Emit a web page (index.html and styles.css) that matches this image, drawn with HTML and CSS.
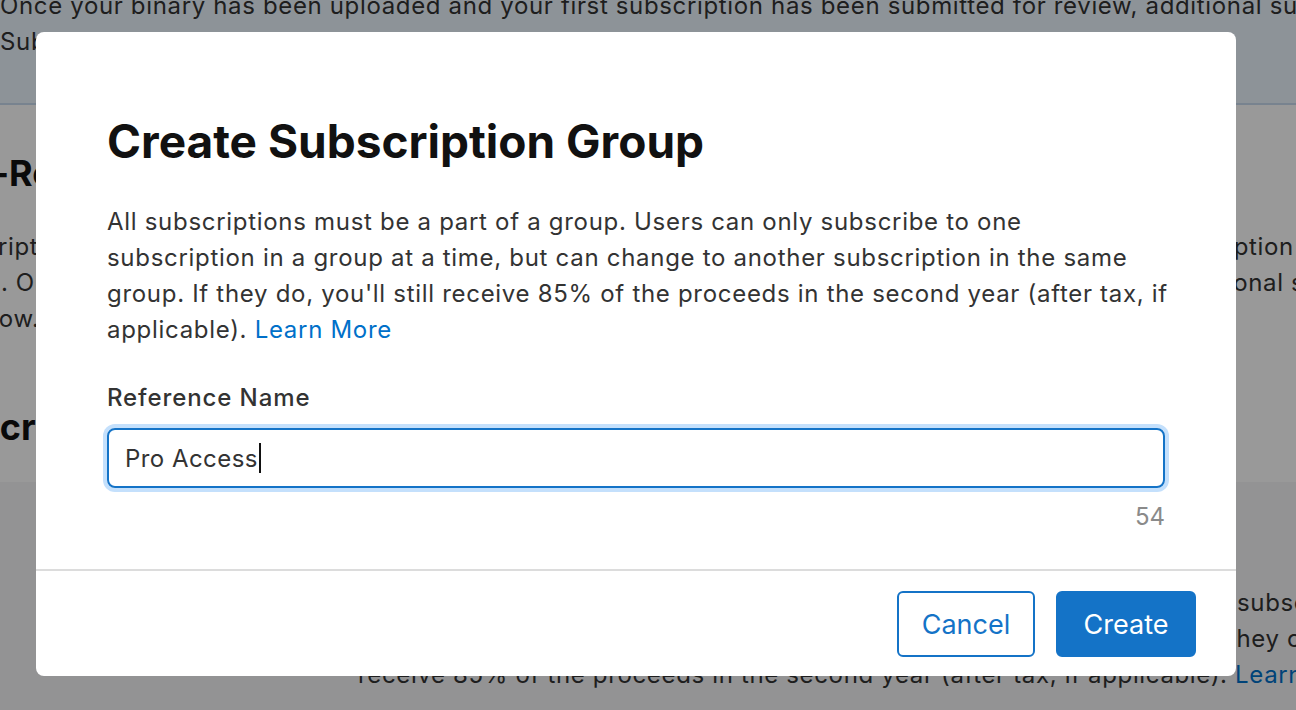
FILE: index.html
```html
<!DOCTYPE html>
<html lang="en">
<head>
<meta charset="utf-8">
<title>Create Subscription Group</title>
<link rel="stylesheet" href="styles.css">
</head>
<body>
<div class="page">
  <div class="banner">
    <p>Once your binary has been uploaded and your first subscription has been submitted for review, additional subscriptions can be submitted from the</p>
    <p>Subscriptions section of your app. <a class="link">Learn More</a></p>
  </div>
  <div class="main">
    <h2 class="bg-heading bg-heading-1">Auto-Renewable Subscriptions</h2>
    <div class="desc">
      <div class="bl bl1"><span class="bl-left">Subscriptions provide access to content, services, or premium features in your app on an ongoing basis.</span><span>subscription</span></div>
      <div class="bl bl2"><span class="bl-left">period. Only one subscription in a group can be active at a time, and users can move between them.</span><span>additional subscriptions</span></div>
      <div class="bl"><span class="bl-left">workflow.</span></div>
    </div>
    <h2 class="bg-heading bg-heading-2">Subscription Groups</h2>
  </div>
  <div class="card">
    <div class="bl bl3"><span class="bl-left">Users can only subscribe to one subscription in a group at a time. If they change</span><span>subscriptions</span></div>
    <div class="bl bl4"><span class="bl-left">within the same group, they keep their subscription days. If they do, you'll still</span><span>they can</span></div>
    <div class="bl"><span>receive 85% of the proceeds in the second year (after tax, if applicable). <a class="link">Learn More</a></span></div>
  </div>
</div>

<div class="overlay">
  <div class="modal" role="dialog" aria-labelledby="dlg-title">
    <div class="modal-body">
      <h1 id="dlg-title" class="modal-title">Create Subscription Group</h1>
      <p class="intro">All subscriptions must be a part of a group. Users can only subscribe to one<br>subscription in a group at a time, but can change to another subscription in the same<br>group. If they do, you'll still receive 85% of the proceeds in the second year (after tax, if<br>applicable). <a class="link">Learn More</a></p>
      <div class="field-label">Reference Name</div>
      <div class="field"><span class="field-text">Pro Access</span><span class="caret"></span></div>
      <div class="counter">54</div>
    </div>
    <div class="modal-footer">
      <button class="btn btn-secondary">Cancel</button>
      <button class="btn btn-primary">Create</button>
    </div>
  </div>
</div>
</body>
</html>
```

FILE: styles.css
```css
html, body {
  margin: 0;
  padding: 0;
  width: 1296px;
  height: 710px;
  overflow: hidden;
  background: #ffffff;
  font-family: Inter, "Noto Sans", "Liberation Sans", sans-serif;
  color: #333333;
}

p { margin: 0; }

.link { color: #0070c9; cursor: pointer; }

/* ---------- background page ---------- */
.page {
  margin-left: -76px;
  margin-top: -12px;
  width: 1500px;
  font-size: 24px;
  line-height: 36px;
  letter-spacing: 0.65px;
  color: #333333;
}

.banner {
  background: #ecf5fe;
  border-bottom: 2px solid #c8dbee;
  padding: 0 0 43px 76px;
  white-space: nowrap;
}

.bg-heading {
  margin: 0;
  font-size: 36px;
  line-height: 44px;
  font-weight: 700;
  letter-spacing: 0;
  color: #111111;
  white-space: nowrap;
}

.bg-heading-1 { margin: 46px 0 0 -16px; }
.bg-heading-2 { margin-left: -13px; }

.desc { margin-top: 34px; margin-bottom: 68px; }

.bl {
  display: grid;
  grid-template-columns: auto;
  white-space: nowrap;
}
.bl-left { overflow: hidden; margin-right: 12px; }
.bl1 { grid-template-columns: 1222px auto; }
.bl2 { grid-template-columns: 1243px auto; }
.bl3 { grid-template-columns: 879px auto; }
.bl4 { grid-template-columns: 870px auto; }

.card {
  margin-top: 33px;
  background: #f5f5f7;
  padding: 103px 0 60px 434px;
}

/* ---------- modal ---------- */
.overlay {
  position: fixed;
  inset: 0;
  background: rgba(0, 0, 0, 0.4);
  display: flex;
  align-items: flex-start;
  padding: 32px 60px 0 36px;
}

.modal {
  width: 1200px;
  background: #ffffff;
  border-radius: 8px;
  display: flex;
  flex-direction: column;
}

.modal-body {
  padding: 81px 71px 34px 71px;
  display: flex;
  flex-direction: column;
}

.modal-title {
  margin: 0 0 35px 0;
  font-size: 46px;
  line-height: 56px;
  font-weight: 700;
  color: #111111;
}

.intro {
  font-size: 24px;
  line-height: 36px;
  letter-spacing: 0.7px;
  white-space: nowrap;
  color: #333333;
}

.field-label {
  margin-top: 32px;
  font-size: 24px;
  line-height: 36px;
  font-weight: 500;
  letter-spacing: 0.9px;
  color: #333333;
}

.field {
  margin-top: 12px;
  height: 60px;
  box-sizing: border-box;
  border: 2px solid #1473c7;
  border-radius: 8px;
  box-shadow: 0 0 0 4px #c4e0fc;
  padding: 0 16px;
  display: flex;
  align-items: center;
  font-size: 24px;
  letter-spacing: 0.45px;
  color: #333333;
}

.caret {
  display: inline-block;
  width: 2px;
  height: 30px;
  background: #111111;
  margin-left: 1px;
}

.counter {
  margin-top: 11px;
  text-align: right;
  font-size: 24px;
  line-height: 36px;
  color: #8a8a8a;
}

.modal-footer {
  border-top: 2px solid #dcdcdc;
  padding: 20px 40px 19px 40px;
  display: flex;
  justify-content: flex-end;
  gap: 21px;
}

.btn {
  height: 66px;
  box-sizing: border-box;
  border-radius: 6px;
  font-family: inherit;
  font-size: 27px;
  font-weight: 400;
  padding: 0 20px;
  cursor: pointer;
}

.btn-secondary {
  width: 138px;
  background: #ffffff;
  border: 2px solid #1473c7;
  color: #1473c7;
}

.btn-primary {
  width: 140px;
  background: #1473c7;
  border: 2px solid #1473c7;
  color: #ffffff;
}
```
